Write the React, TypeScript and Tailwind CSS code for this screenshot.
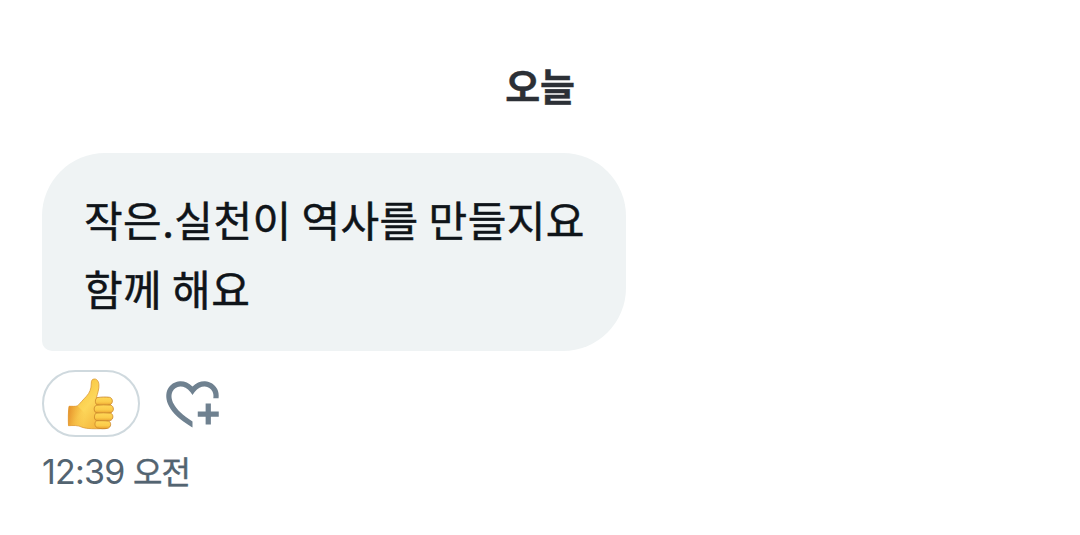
const message = ["작은.실천이 역사를 만들지요", "함께 해요"];

function ThumbsUp() {
  return (
    <svg viewBox="66 377 50 54" className="h-[54px] w-[50px]" aria-hidden="true">
      <defs>
        <linearGradient id="hand" x1="0" y1="0" x2="1" y2="1">
          <stop offset="0" stopColor="#f5b92f" />
          <stop offset="0.5" stopColor="#fdd75a" />
          <stop offset="1" stopColor="#f0a52e" />
        </linearGradient>
        <linearGradient id="wrist" x1="0" y1="0" x2="1" y2="0.2">
          <stop offset="0" stopColor="#e38d2b" />
          <stop offset="1" stopColor="#f7b73a" stopOpacity="0" />
        </linearGradient>
        <linearGradient id="finger" x1="0" y1="0" x2="0" y2="1">
          <stop offset="0" stopColor="#ffd858" />
          <stop offset="0.6" stopColor="#fbcb49" />
          <stop offset="1" stopColor="#e99f2e" />
        </linearGradient>
      </defs>
      <path
        d="M69 406.3C68.2 412 68.2 420 68.5 425.700C73 425.500 78 425 82 427.200C87 429 95 428.900 106 428.500L110 404L96.300 398C97.500 393.500 99.300 389 98.900 384.500C98.600 381 96.700 378.800 94.300 379C92 379.100 91.300 380.700 91.300 383C91.400 389 89.500 393 86.500 396.200C83 399.800 80 403.500 77.500 405.900C75 406.700 72 406.200 69 406.300Z"
        fill="url(#hand)"
        stroke="#dc9832"
        strokeWidth="0.8"
      />
      <path d="M69 406.300C72 406.200 75 406.700 77.500 405.900L86 414L84 427.200C79 425.300 72 425.500 68.500 425.700C68.200 420 68.200 412 69 406.300Z" fill="url(#wrist)" />
      <g fill="url(#finger)" stroke="#c9842a" strokeWidth="0.8">
        <path d="M97 397.600C101 397 106 396.800 109.500 397.300C113.300 398 113.300 404 109.500 404.900C105 405.600 100 405.400 97 404.800C94.800 403.500 95 399 97 397.600Z" />
        <path d="M96 405.300C101 404.800 106 404.700 110.500 405.100C114.400 406 114.300 412 110.500 412.900C105 413.500 100 413.400 96 412.700C93.500 411 93.600 407 96 405.300Z" />
        <path d="M96 413.100C101 412.700 106 412.700 110.300 413.100C113.900 414 113.700 419.800 110 420.600C105 421.200 101 421.100 96 420.400C93.800 419 94 415 96 413.100Z" />
        <path d="M96.500 420.800C101 420.600 105 420.700 108.500 421.100C111.700 422 111.300 427.600 107.500 428.400C104 428.900 101 428.800 97.500 428C94.300 426.500 94.300 422.500 96.500 420.800Z" />
      </g>
    </svg>
  );
}

function AddReaction() {
  return (
    <svg viewBox="0 0 24 24" className="h-[63px] w-[63px] fill-[#6f8190]" aria-hidden="true">
      <path d="M17 12v3h-2.998v2h3v3h2v-3h3v-2h-3v-3H17zm-5 6.839c-3.871-2.34-6.053-4.639-7.127-6.609-1.112-2.04-1.031-3.7-.479-4.82.561-1.13 1.667-1.84 2.91-1.91 1.222-.06 2.68.51 3.892 2.16l.806 1.09.805-1.09c1.211-1.65 2.668-2.22 3.89-2.16 1.242.07 2.347.78 2.908 1.91.334.677.49 1.554.321 2.59h2.011c.153-1.283-.039-2.469-.539-3.48-.887-1.79-2.647-2.91-4.601-3.01-1.65-.09-3.367.56-4.796 2.01-1.43-1.45-3.147-2.1-4.798-2.01-1.954.1-3.714 1.22-4.601 3.01-.896 1.81-.846 4.17.514 6.67 1.353 2.48 4.003 5.12 8.382 7.67l.502.299v-2.32z" />
    </svg>
  );
}

export default function App() {
  return (
    <main className="h-[535px] overflow-hidden bg-white px-[42px] pt-[58px] font-['Noto_Sans_CJK_KR',sans-serif]">
      <h2 className="h-[95px] text-center text-[38px] leading-[54px] font-bold tracking-[-0.3px] text-[#2c3036] [-webkit-text-stroke:0.4px]">
        오늘
      </h2>
      <div className="h-[198px] w-[584px] rounded-[63px] rounded-bl-[10px] bg-[#eff3f4] pt-[31px] pl-[42px] text-[42px] leading-[69px] tracking-[0.45px] whitespace-nowrap text-[#0f1419] [-webkit-text-stroke:0.5px]">
        {message.map((line) => (
          <p key={line}>{line}</p>
        ))}
      </div>
      <div className="mt-[19px] flex h-[67px] items-center">
        <button className="flex h-[67px] w-[98px] items-center justify-center rounded-full border-2 border-[#cfd9de] bg-white">
          <ThumbsUp />
        </button>
        <button className="ml-[21px]">
          <AddReaction />
        </button>
      </div>
      <div className="mt-[11px] flex items-baseline text-[#536471]">
        <span className="w-[82px] font-[Inter,sans-serif] text-[34px] leading-[44px] tracking-[-0.8px]">
          12:39
        </span>
        <span className="ml-[9px] text-[32px] leading-[44px] tracking-[-0.9px] [-webkit-text-stroke:0.4px]">
          오전
        </span>
      </div>
    </main>
  );
}
